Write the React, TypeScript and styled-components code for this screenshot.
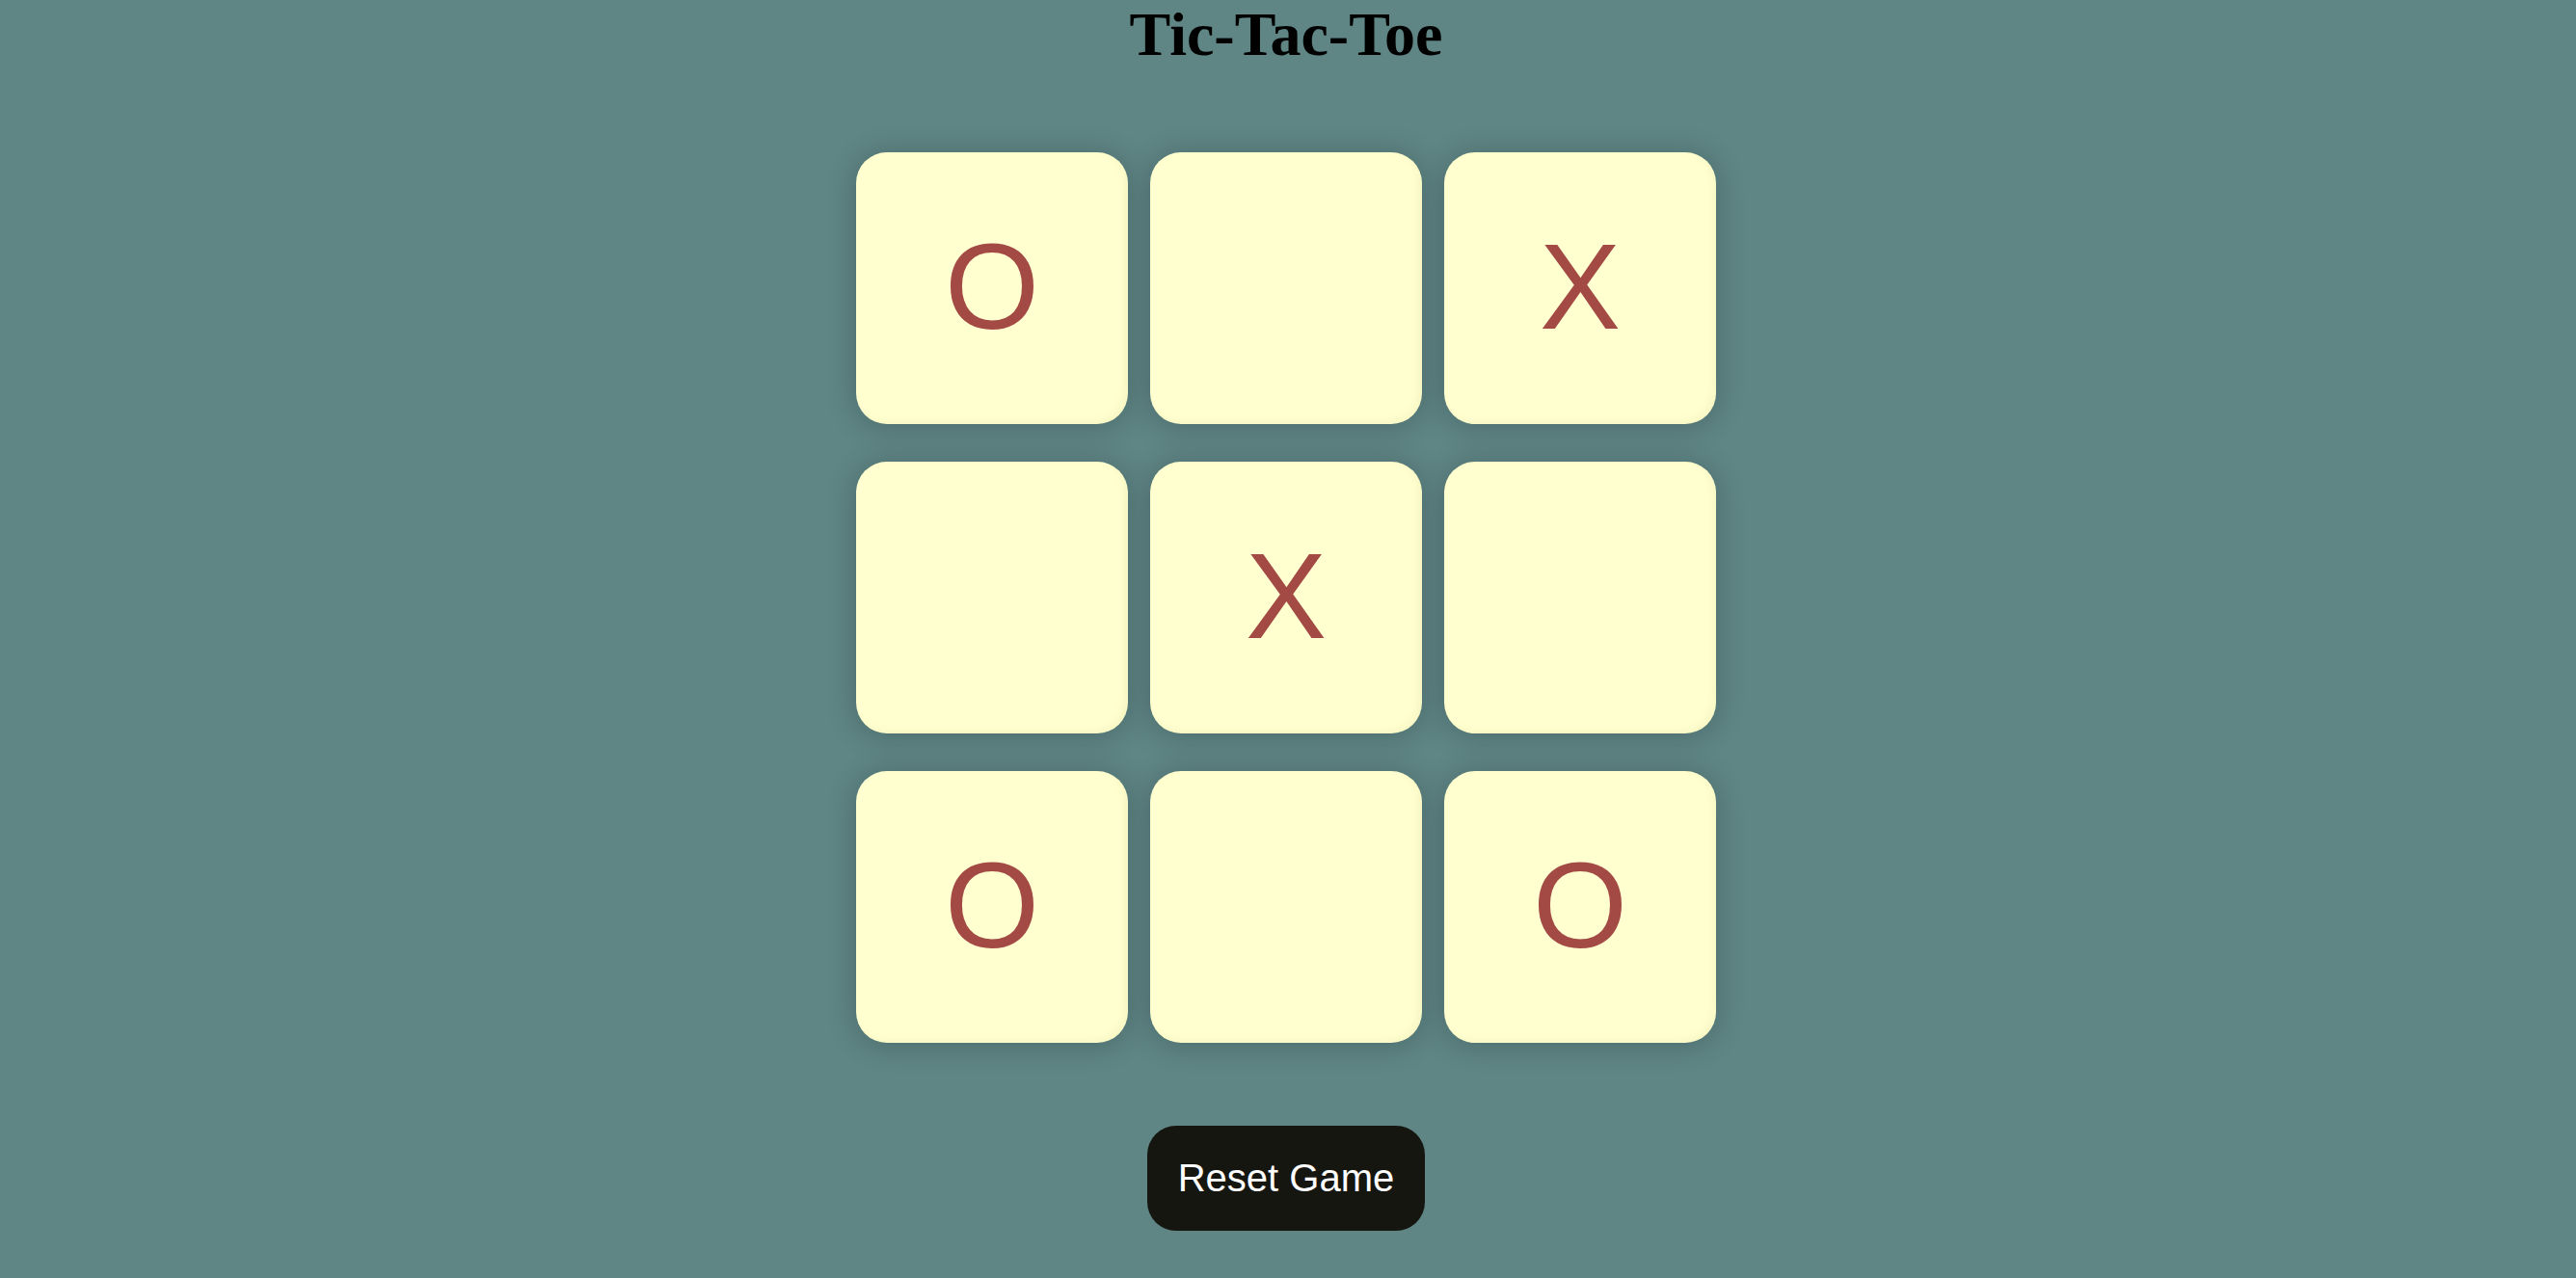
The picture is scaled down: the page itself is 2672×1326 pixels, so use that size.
import React, { useState } from 'react';
import styled, { createGlobalStyle } from 'styled-components';

type Mark = 'X' | 'O' | null;

const GlobalStyle = createGlobalStyle`
	html,
	body {
		margin: 0;
		padding: 0;
		height: 100%;
		background: #5f8585;
	}
	#root {
		min-height: 100%;
	}
`;

const Page = styled.div`
	min-height: 1326px;
	display: flex;
	flex-direction: column;
	align-items: center;
	padding-right: 4px;
	box-sizing: border-box;
	background: #5f8585;
`;

const Title = styled.h1`
	margin: 0;
	font-family: 'Liberation Serif', 'Times New Roman', serif;
	font-size: 64px;
	font-weight: 700;
	line-height: 71px;
	color: #000;
`;

const Board = styled.div`
	margin-top: 87px;
	display: grid;
	grid-template-columns: repeat(3, 282px);
	grid-auto-rows: 282px;
	column-gap: 23px;
	row-gap: 39px;
`;

const Cell = styled.button<{ $filled: boolean }>`
	display: flex;
	align-items: center;
	justify-content: center;
	padding: 0 0 2px;
	border: none;
	border-radius: 32px;
	background: #ffffd0;
	box-shadow: 0 2px 30px rgba(0, 0, 0, 0.22),
		inset -4px -3px 8px rgba(120, 110, 0, 0.05);
	font-family: 'Liberation Sans', Arial, sans-serif;
	font-size: 126px;
	font-weight: 400;
	line-height: 1;
	color: #a34a45;
	cursor: ${(p) => (p.$filled ? 'default' : 'pointer')};
`;

const ResetButton = styled.button`
	margin-top: 86px;
	width: 288px;
	height: 109px;
	border: none;
	border-radius: 30px;
	background: #161611;
	color: #fff;
	font-family: 'Liberation Sans', Arial, sans-serif;
	font-size: 40px;
	cursor: pointer;
`;

const START: Mark[] = ['O', null, 'X', null, 'X', null, 'O', null, 'O'];

function App() {
	const [cells, setCells] = useState<Mark[]>(START);
	const [turn, setTurn] = useState<'X' | 'O'>('X');

	const clickHandler = (i: number) => {
		if (cells[i]) return;
		const next = [...cells];
		next[i] = turn;
		setCells(next);
		setTurn(turn === 'X' ? 'O' : 'X');
	};

	// 보드 초기화
	const resetHandler = () => {
		setCells(Array(9).fill(null));
		setTurn('X');
	};

	return (
		<Page>
			<GlobalStyle />
			<Title>Tic-Tac-Toe</Title>
			<Board>
				{cells.map((mark, i) => (
					<Cell key={i} $filled={!!mark} onClick={() => clickHandler(i)}>
						{mark}
					</Cell>
				))}
			</Board>
			<ResetButton onClick={resetHandler}>Reset Game</ResetButton>
		</Page>
	);
}

export default App;
